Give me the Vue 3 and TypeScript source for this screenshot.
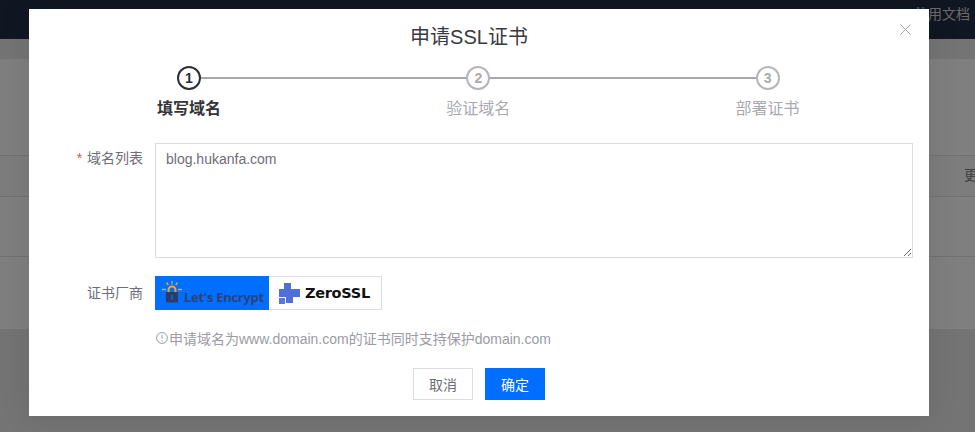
<script setup lang="ts">
const steps = [
  { n: 1, label: '填写域名', active: true },
  { n: 2, label: '验证域名', active: false },
  { n: 3, label: '部署证书', active: false },
]
</script>

<template>
  <div class="page">
    <header class="topbar"><span class="top-doc">使用文档</span></header>
    <main class="bg-panel">
      <div class="bg-space"></div>
      <div class="bg-row head"><span class="more">更</span></div>
      <div class="bg-row r2"></div>
      <div class="bg-row r3"></div>
    </main>
    <div class="mask"></div>
    <section class="modal">
      <div class="title">申请SSL证书</div>
      <svg class="close" width="11" height="11" viewBox="0 0 11 11"><path d="M.5.5l10 10M10.500.5l-10 10" stroke="#a3a3a8" stroke-width="1" fill="none" /></svg>
      <div class="steps">
        <div v-for="(s, i) in steps" :key="s.n" class="step" :class="{ active: s.active, last: i === 2 }">
          <div class="step-head">
            <span class="dot">{{ s.n }}</span>
            <span v-if="i < 2" class="line"></span>
          </div>
          <div class="step-label">{{ s.label }}</div>
        </div>
      </div>
      <div class="form">
        <div class="row domains">
          <label class="lab"><i>*</i> 域名列表</label>
          <textarea class="ta" readonly>blog.hukanfa.com</textarea>
        </div>
        <div class="row vendor">
          <label class="lab">证书厂商</label>
          <div class="group">
            <div class="opt le">
              <svg width="20" height="22" viewBox="0 0 20 22">
                <g stroke="#f9a51a" stroke-width="1.300" fill="none">
                  <path d="M10 0v3.500M4.500 1.500l1.800 2.500M15.500 1.500l-1.800 2.500M0 8.500h4M16 8.500h4" />
                  <path d="M6.500 11V9a3.500 3.500 0 0 1 7 0v2" stroke-width="2" />
                </g>
                <rect x="4" y="11" width="12" height="10.500" rx="1" fill="#2c3c69" />
                <rect x="9.300" y="14" width="1.400" height="4.500" fill="#0a6cf5" />
              </svg>
              <span>Let's Encrypt</span>
            </div>
            <div class="opt zero">
              <svg width="21" height="21" viewBox="0 0 21 21">
                <path d="M5 0h7v6h9v8h-7v6h-7v-6H0V6h5z" fill="#4f6fd8" />
                <rect x="0" y="15" width="6" height="6" fill="#5577e0" />
              </svg>
              <span>ZeroSSL</span>
            </div>
          </div>
        </div>
        <div class="tip">
          <svg width="12" height="12" viewBox="0 0 12 12"><circle cx="6" cy="6" r="5.400" fill="none" stroke="#9b9ba3" /><path d="M6 2.800v4M6 8.200v1.100" stroke="#9b9ba3" fill="none" /></svg>
          <span>申请域名为www.domain.com的证书同时支持保护domain.com</span>
        </div>
      </div>
      <div class="footer">
        <button class="btn ghost">取消</button>
        <button class="btn primary">确定</button>
      </div>
    </section>
  </div>
</template>

<style>
html, body { margin: 0; padding: 0; background: #737374; }
</style>

<style scoped>
.page {
  position: relative;
  width: 975px;
  height: 432px;
  overflow: hidden;
  background: #e9e9ea;
  font-family: "Liberation Sans", "Noto Sans CJK SC", sans-serif;
  font-size: 14px;
  color: #6e6e76;
}
.topbar {
  height: 39px;
  background: #222e44;
  display: flex;
  justify-content: flex-end;
  padding-right: 5px;
  box-sizing: border-box;
}
.top-doc { color: #d4d4d8; font-size: 14px; line-height: 18px; margin-top: 5px; }
.bg-panel {
  margin-top: 20px;
  height: 270px;
  background: #fff;
}
.bg-space { height: 96px; }
.bg-row { border-top: 1px solid #e2e2e8; box-sizing: border-box; }
.head { height: 41px; background: #fafafa; position: relative; overflow: hidden; }
.more { position: absolute; left: 964px; top: 10px; color: #7d7d82; font-size: 14px; line-height: 18px; }
.r2 { height: 60px; }
.r3 { height: 73px; }
.mask { position: absolute; inset: 0; background: rgba(0, 0, 0, 0.5); }
.modal {
  position: absolute;
  left: 29px;
  top: 9px;
  width: 900px;
  height: 407px;
  background: #fff;
  box-sizing: border-box;
  box-shadow: 0 0 30px rgba(0, 0, 0, 0.1);
}
.title {
  text-align: center;
  font-size: 20px;
  line-height: 24px;
  color: #3a3a42;
  padding: 16px 20px 0 0;
}
.close { position: absolute; right: 18px; top: 15px; }
.steps {
  display: flex;
  margin-left: 119px;
  margin-top: 17px;
}
.step { width: 289.300px; flex: none; }
.step.last { width: 60px; }
.step-head { display: flex; align-items: center; margin: 0 -29px 0 29px; height: 24px; }
.dot {
  width: 24px;
  height: 24px;
  flex: none;
  box-sizing: border-box;
  border: 2px solid #b5b5bb;
  border-radius: 50%;
  background: #fff;
  color: #a9a9b0;
  font-size: 14px;
  font-weight: 700;
  text-align: center;
  line-height: 20px;
}
.line { flex: 1; height: 2px; background: #a7a7ad; }
.step.active .dot { border-color: #2f2f36; color: #2f2f36; }
.step-label {
  width: 80px;
  margin-top: 8px;
  margin-left: 1px;
  text-align: center;
  font-size: 16px;
  line-height: 22px;
  color: #a9a9b0;
  white-space: nowrap;
}
.step.active .step-label { color: #33333a; font-weight: 700; }
.form { margin-top: 23px; }
.row { display: flex; }
.lab {
  width: 114px;
  flex: none;
  text-align: right;
  font-size: 14px;
  color: #6e6e76;
  line-height: 18px;
  padding-top: 6px;
}
.lab i { color: #d9534f; font-style: normal; margin-right: 1px; }
.ta {
  display: block;
  width: 758px;
  height: 115px;
  margin-left: 12px;
  box-sizing: border-box;
  border: 1px solid #dcdce4;
  border-radius: 0;
  padding: 6px 10px;
  font: 14px/18px "Liberation Sans", "Noto Sans CJK SC", sans-serif;
  color: #6e6e76;
  outline: none;
  resize: vertical;
}
.vendor { margin-top: 18px; align-items: center; }
.vendor .lab { padding-top: 0; }
.group { display: flex; margin-left: 12px; height: 34px; }
.opt { box-sizing: border-box; height: 34px; display: flex; align-items: center; flex: none; }
.le {
  width: 114px;
  background: #006eff;
  padding-left: 7px;
  gap: 2px;
  color: #2f4178;
  font: 700 13px/16px "Open Sans", sans-serif;
  letter-spacing: -0.300px;
  white-space: nowrap;
}
.le span { margin-top: 8px; }
.le svg { margin-top: -3px; flex: none; }
.zero {
  width: 113px;
  border: 1px solid #dcdce4;
  border-left: 0;
  padding-left: 10px;
  gap: 5px;
  color: #111;
  font: 700 14.500px/18px "DejaVu Sans", sans-serif;
  letter-spacing: -0.300px;
}
.tip {
  margin-left: 127px;
  margin-top: 19px;
  display: flex;
  align-items: center;
  gap: 1px;
  height: 18px;
  font-size: 14px;
  color: #9b9ba3;
  white-space: nowrap;
}
.footer { display: flex; justify-content: center; gap: 12px; margin-top: 21px; }
.btn {
  width: 60px;
  height: 32px;
  box-sizing: border-box;
  font: 14px "Liberation Sans", "Noto Sans CJK SC", sans-serif;
  border-radius: 0;
  padding: 0;
}
.ghost { background: #fff; border: 1px solid #dcdce4; color: #6e6e76; }
.primary { background: #006eff; border: 1px solid #006eff; color: #fff; }
</style>
